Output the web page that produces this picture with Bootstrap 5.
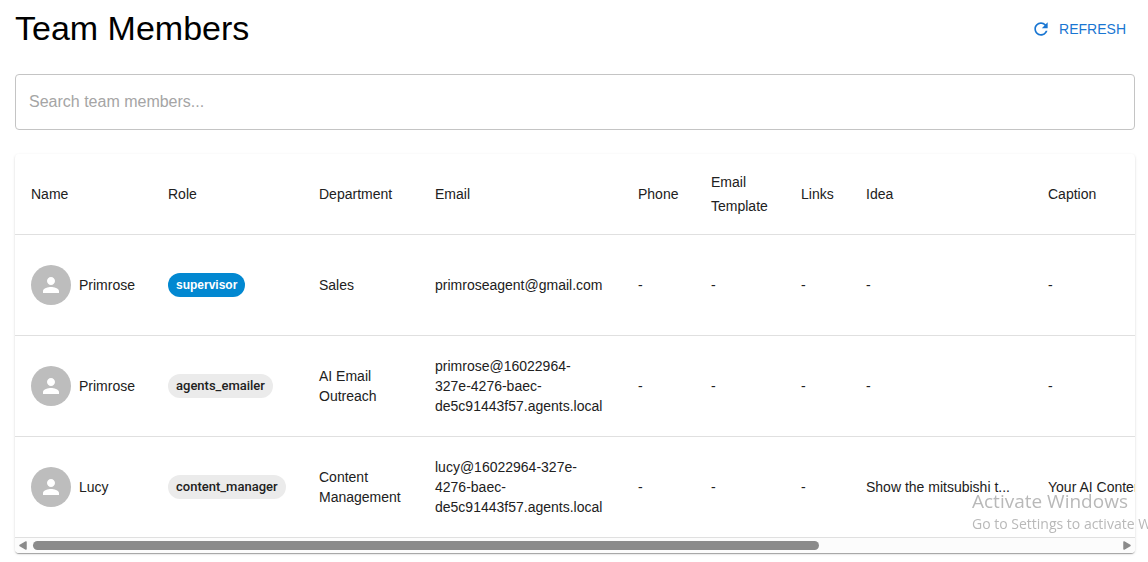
<!DOCTYPE html>
<html lang="en">
<head>
<meta charset="utf-8">
<meta name="viewport" content="width=device-width, initial-scale=1">
<title>Team Members</title>
<link href="https://cdn.jsdelivr.net/npm/bootstrap@5.3.0/dist/css/bootstrap.min.css" rel="stylesheet">
<script src="https://cdn.jsdelivr.net/npm/bootstrap@5.3.0/dist/js/bootstrap.bundle.min.js" defer></script>
<style>
  body { font-family: "Liberation Sans", Arial, sans-serif; font-size: 14px; line-height: 20px; color: #212121; background: #fff; overflow-x: hidden; }
  .page { padding: 8px 13px 8px 15px; }
  .page-header { height: 42px; }
  .page-title { font-size: 34px; line-height: 40px; color: #000; }
  .btn-refresh { --bs-btn-color: #1976d2; --bs-btn-hover-color: #1565c0; --bs-btn-padding-x: 8px; --bs-btn-padding-y: 6px; --bs-btn-font-size: 14px; --bs-btn-line-height: 24px; }
  .search-box { height: 56px; padding: 0 13px; font-size: 16px; border-color: #c4c4c4; border-radius: 4px; }
  .search-box::placeholder { color: #a5a5a5; }
  .team-panel { border-radius: 4px; box-shadow: 0 2px 1px -1px rgba(0,0,0,.2), 0 1px 1px rgba(0,0,0,.14), 0 1px 3px rgba(0,0,0,.12); }
  .team-table { table-layout: fixed; width: 1549px; --bs-table-bg: transparent; --bs-table-color: #212121; }
  .team-table > :not(caption) > * > * { padding: 0 16px; vertical-align: middle; border-bottom: 1px solid #e0e0e0; }
  .team-table th { height: 80px; font-weight: 400; line-height: 24px; }
  .team-table td { height: 101px; }
  .c-name { width: 137px; } .c-role { width: 151px; } .c-dept { width: 116px; } .c-email { width: 203px; }
  .c-phone { width: 73px; } .c-template { width: 90px; } .c-links { width: 65px; } .c-idea { width: 182px; }
  .avatar { width: 40px; height: 40px; background: #bdbdbd; }
  .role-chip { height: 24px; padding: 0 8px; border-radius: 12px; font-size: 13px; background: #ebebeb; font-family: Roboto, "Liberation Sans", sans-serif; font-weight: 500; }
  .role-chip.supervisor { background: #0288d1; color: #fff; font-family: inherit; font-size: 12px; font-weight: 700; }
  .scroll-strip { height: 15px; padding: 0 4px; background: #fcfcfc; }
  .scroll-track { margin: 0 5px 0 6px; }
  .scroll-thumb { height: 9px; border-radius: 5px; background: #8b8b8b; }
  .watermark { right: 0; bottom: 28px; width: 176px; font-family: "Open Sans", sans-serif; color: #b9b9b9; pointer-events: none; }
  .watermark-title { font-size: 19px; line-height: 26px; }
  .watermark-note { font-size: 14px; line-height: 20px; }
</style>
</head>
<body>
<svg class="d-none"><symbol id="person" viewBox="0 0 24 24"><path fill="currentColor" d="M12 12c2.21 0 4-1.79 4-4s-1.79-4-4-4-4 1.79-4 4 1.79 4 4 4m0 2c-2.67 0-8 1.34-8 4v2h16v-2c0-2.66-5.33-4-8-4"/></symbol></svg>
<main class="page">
  <header class="page-header d-flex justify-content-between align-items-start mb-4">
    <h1 class="page-title fw-normal m-0">Team Members</h1>
    <button type="button" class="btn btn-refresh d-flex align-items-center align-self-center gap-2">
      <svg width="20" height="20" viewBox="0 0 24 24" fill="currentColor" aria-hidden="true"><path d="M17.65 6.35C16.2 4.9 14.21 4 12 4c-4.42 0-7.99 3.58-7.99 8s3.57 8 7.99 8c3.73 0 6.84-2.55 7.73-6h-2.08c-.82 2.33-3.04 4-5.65 4-3.31 0-6-2.69-6-6s2.69-6 6-6c1.66 0 3.14.69 4.22 1.78L13 11h7V4z"/></svg>
      REFRESH
    </button>
  </header>
  <input type="search" class="form-control search-box mb-4" placeholder="Search team members..." aria-label="Search team members">
  <section class="team-panel overflow-hidden" aria-label="Team members">
    <div class="overflow-hidden">
      <table class="table team-table mb-0">
        <colgroup><col class="c-name"><col class="c-role"><col class="c-dept"><col class="c-email"><col class="c-phone"><col class="c-template"><col class="c-links"><col class="c-idea"><col></colgroup>
        <thead>
          <tr><th scope="col">Name</th><th scope="col">Role</th><th scope="col">Department</th><th scope="col">Email</th><th scope="col">Phone</th><th scope="col">Email Template</th><th scope="col">Links</th><th scope="col">Idea</th><th scope="col">Caption</th></tr>
        </thead>
        <tbody>
          <tr>
            <td><div class="d-flex align-items-center gap-2"><span class="avatar rounded-circle d-flex align-items-center justify-content-center text-white"><svg width="24" height="24" aria-hidden="true"><use href="#person"/></svg></span>Primrose</div></td>
            <td><span class="role-chip supervisor d-inline-flex align-items-center">supervisor</span></td>
            <td>Sales</td><td class="text-nowrap">primroseagent@gmail.com</td><td>-</td><td>-</td><td>-</td><td>-</td><td>-</td>
          </tr>
          <tr>
            <td><div class="d-flex align-items-center gap-2"><span class="avatar rounded-circle d-flex align-items-center justify-content-center text-white"><svg width="24" height="24" aria-hidden="true"><use href="#person"/></svg></span>Primrose</div></td>
            <td><span class="role-chip d-inline-flex align-items-center">agents_emailer</span></td>
            <td>AI Email Outreach</td><td>primrose@16022964-<br>327e-4276-baec-<br>de5c91443f57.agents.local</td><td>-</td><td>-</td><td>-</td><td>-</td><td>-</td>
          </tr>
          <tr>
            <td><div class="d-flex align-items-center gap-2"><span class="avatar rounded-circle d-flex align-items-center justify-content-center text-white"><svg width="24" height="24" aria-hidden="true"><use href="#person"/></svg></span>Lucy</div></td>
            <td><span class="role-chip d-inline-flex align-items-center">content_manager</span></td>
            <td>Content Management</td><td>lucy@16022964-327e-<br>4276-baec-<br>de5c91443f57.agents.local</td><td>-</td><td>-</td><td>-</td><td class="text-nowrap">Show the mitsubishi t...</td><td class="text-nowrap">Your AI Content</td>
          </tr>
        </tbody>
      </table>
    </div>
    <div class="scroll-strip d-flex align-items-center" aria-hidden="true">
      <svg width="8" height="9" viewBox="0 0 8 9"><path d="M7 1v7L1 4.500z" fill="#8b8b8b" stroke="#8b8b8b" stroke-width="1.500" stroke-linejoin="round"/></svg>
      <div class="scroll-track flex-grow-1"><div class="scroll-thumb" style="width:72.400%"></div></div>
      <svg width="8" height="9" viewBox="0 0 8 9"><path d="M1 1v7l6-3.500z" fill="#8b8b8b" stroke="#8b8b8b" stroke-width="1.500" stroke-linejoin="round"/></svg>
    </div>
  </section>
</main>
<aside class="watermark position-fixed overflow-hidden text-nowrap">
  <div class="watermark-title">Activate Windows</div>
  <div class="watermark-note">Go to Settings to activate Windows.</div>
</aside>
</body>
</html>
